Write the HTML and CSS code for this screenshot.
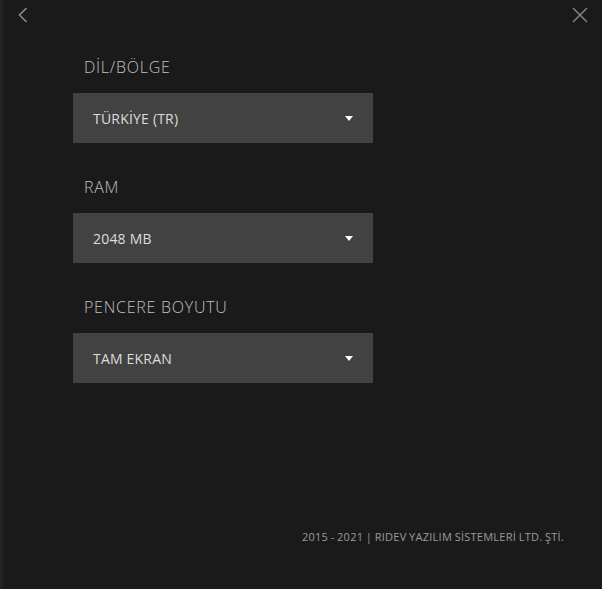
FILE: index.html
```html
<!DOCTYPE html>
<html lang="tr">
<head>
<meta charset="utf-8">
<title>Ayarlar</title>
<link rel="stylesheet" href="styles.css">
</head>
<body>
<div class="app">
  <header class="topbar">
    <button class="icon-btn back" aria-label="Geri">
      <svg width="12" height="16" viewBox="0 0 12 16"><path d="M9.5 1 L2.5 8 L9.5 15" fill="none" stroke="#8a8a8a" stroke-width="1.6"/></svg>
    </button>
    <button class="icon-btn close" aria-label="Kapat">
      <svg width="16" height="16" viewBox="0 0 16 16"><path d="M1 1 L15 15 M15 1 L1 15" fill="none" stroke="#8a8a8a" stroke-width="1.4"/></svg>
    </button>
  </header>
  <main class="settings">
    <section class="field">
      <div class="label">DİL/BÖLGE</div>
      <div class="select"><span class="value">TÜRKİYE (TR)</span><span class="caret"></span></div>
    </section>
    <section class="field">
      <div class="label">RAM</div>
      <div class="select"><span class="value">2048 MB</span><span class="caret"></span></div>
    </section>
    <section class="field">
      <div class="label">PENCERE BOYUTU</div>
      <div class="select"><span class="value">TAM EKRAN</span><span class="caret"></span></div>
    </section>
  </main>
  <footer class="footer">2015 - 2021 | RIDEV YAZILIM SİSTEMLERİ LTD. ŞTİ.</footer>
</div>
</body>
</html>
```
FILE: styles.css
```css
* { box-sizing: border-box; }
html, body { margin: 0; padding: 0; height: 100%; }
body {
  background: #1a1a1a;
  font-family: "Open Sans", "Liberation Sans", sans-serif;
}
.app {
  height: 100vh;
  border-left: 3px solid #232323;
  display: flex;
  flex-direction: column;
}
.topbar {
  height: 30px;
  display: flex;
  justify-content: space-between;
  align-items: flex-start;
  padding: 7px 14px 0 14px;
}
.icon-btn {
  background: none;
  border: 0;
  padding: 0;
  display: flex;
  cursor: pointer;
}
.settings {
  padding-left: 70px;
  display: flex;
  flex-direction: column;
  gap: 34px;
  padding-top: 27px;
}
.field {
  display: flex;
  flex-direction: column;
  gap: 16px;
}
.label {
  padding-left: 11px;
  font-size: 16px;
  font-weight: 300;
  letter-spacing: 0.75px;
  line-height: 20px;
  color: #c0c0c0;
}
.select {
  width: 300px;
  height: 50px;
  background: #424242;
  display: flex;
  align-items: center;
  justify-content: space-between;
  padding: 0 20px 0 20px;
}
.value {
  font-size: 14px;
  letter-spacing: 0.2px;
  color: #dcdcdc;
}
.caret {
  width: 0;
  height: 0;
  border-left: 4px solid transparent;
  border-right: 4px solid transparent;
  border-top: 5px solid #ffffff;
}
.footer {
  margin-top: auto;
  align-self: flex-end;
  padding: 0 38px 45px 0;
  font-size: 11px;
  letter-spacing: 0.25px;
  word-spacing: -0.5px;
  color: #9a9a9a;
}
```
